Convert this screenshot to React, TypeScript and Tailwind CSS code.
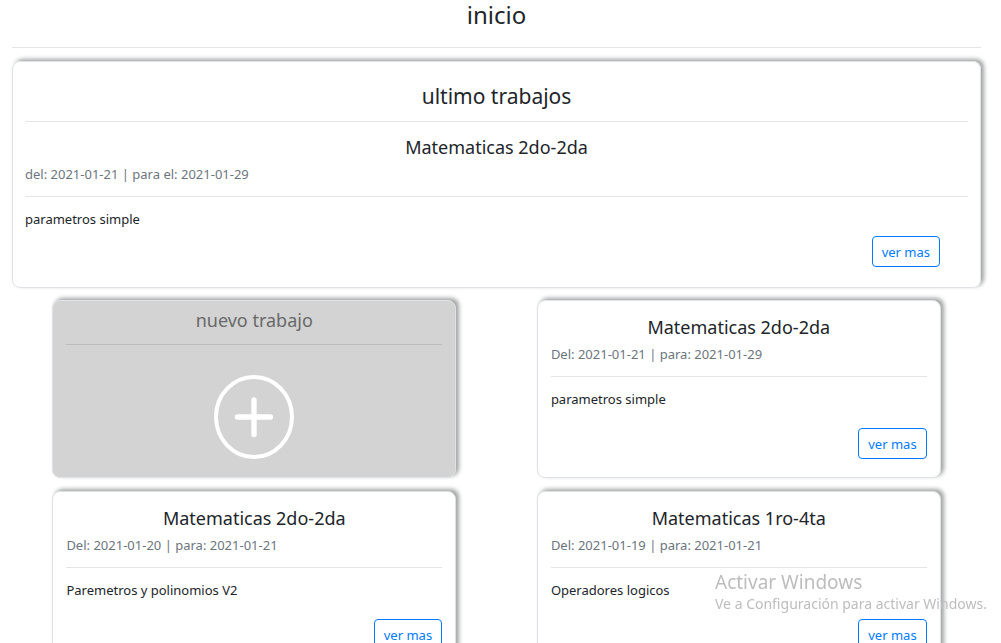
type Work = { title: string; dates: string; text: string };

const works: Work[] = [
  { title: "Matematicas 2do-2da", dates: "Del: 2021-01-21 | para: 2021-01-29", text: "parametros simple" },
  { title: "Matematicas 2do-2da", dates: "Del: 2021-01-20 | para: 2021-01-21", text: "Paremetros y polinomios V2" },
  { title: "Matematicas 1ro-4ta", dates: "Del: 2021-01-19 | para: 2021-01-21", text: "Operadores logicos" },
];

const card = "rounded-lg border border-[#dee2e6] shadow-[3px_-2px_4px_#a0a4a3]";

function MoreButton() {
  return (
    <button
      type="button"
      className="h-[31px] rounded border border-[#007bff] px-[9px] text-[13px] leading-5 text-[#007bff] hover:bg-[#007bff] hover:text-white"
    >
      ver mas
    </button>
  );
}

function WorkBody({ title, dates, text }: Work) {
  return (
    <>
      <h3 className="text-center text-[18px] leading-6">{title}</h3>
      <p className="mt-[5px] text-[13px] leading-5 text-[#6c757d]">{dates}</p>
      <hr className="my-3 border-black/10" />
      <p className="text-[13px] leading-5">{text}</p>
    </>
  );
}

function WorkCard(work: Work) {
  return (
    <article className={`${card} w-5/6 bg-white px-[13px] pt-[14px] pb-[18px]`}>
      <WorkBody {...work} />
      <div className="mt-[19px] flex justify-end">
        <MoreButton />
      </div>
    </article>
  );
}

function NewWorkCard() {
  return (
    <a href="#nuevo" className={`${card} flex w-5/6 flex-col bg-[#d3d3d3] px-[13px] pt-[7px]`}>
      <h3 className="text-center text-[18px] leading-6 text-[#696969]">nuevo trabajo</h3>
      <hr className="mt-3 border-[#bcbcbc]" />
      <svg
        viewBox="0 0 80 84"
        className="mx-auto mt-[30px] h-[84px] w-20"
        fill="none"
        stroke="white"
        strokeLinecap="round"
        aria-hidden="true"
      >
        <ellipse cx="40" cy="42" rx="38" ry="40" strokeWidth="4" />
        <path d="M40 25V59.500M23.500 42H56.500" strokeWidth="5.300" />
      </svg>
    </a>
  );
}

export default function App() {
  return (
    <div className="min-h-screen bg-white font-['Noto_Sans','Open_Sans',sans-serif] text-[#212529]">
      <main className="pr-5 pl-3">
        <h1 className="text-center text-[24px] leading-[30px]">inicio</h1>
        <hr className="mt-[17px] mb-[13px] border-black/10" />
        <section className={`${card} px-3 pt-5 pb-5`}>
          <h2 className="text-center text-[21px] leading-7">ultimo trabajos</h2>
          <hr className="mt-[11px] mb-[13px] border-black/10" />
          <WorkBody
            title="Matematicas 2do-2da"
            dates="del: 2021-01-21 | para el: 2021-01-29"
            text="parametros simple"
          />
          <div className="mt-[7px] flex justify-end pr-7">
            <MoreButton />
          </div>
        </section>
        <div className="mt-3 grid grid-cols-2 justify-items-center gap-y-[13px]">
          <NewWorkCard />
          {works.map((work) => (
            <WorkCard key={work.dates} {...work} />
          ))}
        </div>
      </main>
      <aside className="pointer-events-none fixed right-[11px] bottom-[29px] w-[275px] text-[#bdbdbd]">
        <p className="text-[19px] leading-6">Activar Windows</p>
        <p className="text-[14px] leading-5">Ve a Configuración para activar Windows.</p>
      </aside>
    </div>
  );
}
